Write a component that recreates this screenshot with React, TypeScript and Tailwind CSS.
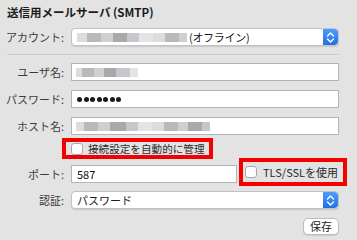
import React from "react";

const font = { fontFamily: '"Noto Sans CJK JP", "Noto Sans", sans-serif' };

function Label({ children }: { children: React.ReactNode }) {
  return (
    <div className="w-[64px] shrink-0 whitespace-nowrap text-right text-[11px] leading-[18px] text-[#3c3c3c]">
      {children}
    </div>
  );
}

function Stepper() {
  return (
    <div className="flex h-full w-[15px] items-center justify-center rounded-r-[4px] bg-gradient-to-b from-[#4d9bfa] to-[#1f6fe8]">
      <svg width="9" height="13" viewBox="0 0 9 13" fill="none">
        <path d="M1.5 5 L4.5 2 L7.5 5" stroke="white" strokeWidth="1.4" strokeLinecap="round" strokeLinejoin="round" />
        <path d="M1.5 8 L4.5 11 L7.5 8" stroke="white" strokeWidth="1.4" strokeLinecap="round" strokeLinejoin="round" />
      </svg>
    </div>
  );
}

function Popup({ children }: { children: React.ReactNode }) {
  return (
    <div className="flex h-[18px] w-[268px] items-stretch rounded-[4px] border border-[#c2c2c2] bg-white shadow-[0_1px_1px_rgba(0,0,0,0.12)]">
      <div className="flex flex-1 items-center overflow-hidden whitespace-nowrap pl-[5px] text-[11px] text-[#1a1a1a]">
        {children}
      </div>
      <Stepper />
    </div>
  );
}

function Field({ w = "w-[268px]", children }: { w?: string; children?: React.ReactNode }) {
  return (
    <div className={`flex h-[18px] ${w} items-center border border-[#b4b4b4] bg-white pl-[4px] text-[11px] text-[#111]`}>
      {children}
    </div>
  );
}

function Blur({ w }: { w: number[] }) {
  const shades = ["bg-[#dcdcdc]", "bg-[#b9b9b9]", "bg-[#cfcfcf]", "bg-[#a9a9a9]", "bg-[#c4c8cc]", "bg-[#e4e4e4]"];
  return (
    <div className="flex h-[9px] items-center blur-[0.6px]">
      {w.map((x, i) => (
        <div key={i} className={`h-[9px] ${shades[i % shades.length]}`} style={{ width: x }} />
      ))}
    </div>
  );
}

function Checkbox() {
  return <div className="h-[12px] w-[12px] shrink-0 rounded-[3px] border border-[#a8a8a8] bg-white" />;
}

export default function App() {
  return (
    <div className="h-[240px] w-[357px] bg-[#e3e3e3] pt-[5px]" style={font}>
      <div className="pl-[7px] text-[11.5px] font-bold leading-[15px] text-[#1b1b1b]">
        送信用メールサーバ (SMTP)
      </div>

      <div className="mt-[8px] flex gap-[7px]">
        <Label>アカウント:</Label>
        <Popup>
          <Blur w={[10, 14, 12, 14, 12, 14, 12, 14, 8]} />
          <span className="ml-[2px] text-[11px] tracking-[-0.3px]">(オフライン)</span>
        </Popup>
      </div>

      <div className="ml-[7px] mt-[8px] h-px w-[332px] bg-[#cbcbcb]" />

      <div className="mt-[8px] flex gap-[7px]">
        <Label>ユーザ名:</Label>
        <Field>
          <Blur w={[6, 12, 10, 12, 14, 8]} />
        </Field>
      </div>

      <div className="mt-[9px] flex gap-[7px]">
        <Label>パスワード:</Label>
        <Field>
          <div className="flex gap-[1.5px] pl-[1px]">
            {[0, 1, 2, 3, 4, 5, 6].map((i) => (
              <div key={i} className="h-[5px] w-[5px] rounded-full bg-[#1a1a1a]" />
            ))}
          </div>
        </Field>
      </div>

      <div className="mt-[9px] flex gap-[7px]">
        <Label>ホスト名:</Label>
        <Field>
          <Blur w={[8, 14, 12, 16, 12, 14, 12, 14, 10, 14, 8]} />
        </Field>
      </div>

      <div className="ml-[62px] mt-[3px] flex h-[21px] w-[151px] items-center gap-[5px] border-[4px] border-[#f50000] pl-[5px]">
        <Checkbox />
        <span className="whitespace-nowrap text-[10.6px] leading-[13px] text-[#2a2a2a]">接続設定を自動的に管理</span>
      </div>

      <div className="-mt-[1px] flex h-[28px] items-start gap-[7px]">
        <Label>
          <span className="mt-[7px] block">ポート:</span>
        </Label>
        <div className="mt-[7px]">
          <Field w="w-[166px]">
            <span className="pl-[1px]">587</span>
          </Field>
        </div>
        <div className="-ml-[5px] flex h-[28px] w-[108px] items-center gap-[6px] border-[4px] border-[#f50000] pl-[2px]">
          <Checkbox />
          <span className="whitespace-nowrap text-[11px] leading-[13px] text-[#2a2a2a]">TLS/SSLを使用</span>
        </div>
      </div>

      <div className="mt-[5px] flex gap-[7px]">
        <Label>認証:</Label>
        <Popup>
          <span>パスワード</span>
        </Popup>
      </div>

      <div className="mt-[9px] flex justify-end pr-[18px]">
        <div className="flex h-[17px] w-[36px] items-center justify-center rounded-[5px] border border-[#bdbdbd] bg-white text-[11px] text-[#222] shadow-[0_1px_1px_rgba(0,0,0,0.1)]">
          保存
        </div>
      </div>
    </div>
  );
}
